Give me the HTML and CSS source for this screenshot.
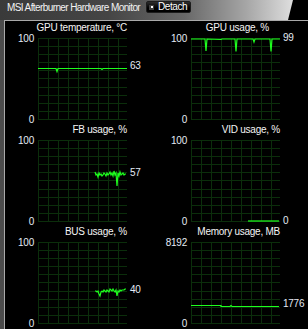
FILE: index.html
```html
<!DOCTYPE html>
<html lang="en">
<head>
    <meta charset="UTF-8">
    <meta name="viewport" content="width=device-width, initial-scale=1.0">
    <title>MSI Afterburner Hardware Monitor</title>
    <link rel="stylesheet" href="styles.css">
</head>
<body>
    <div class="titlebar">
        <span class="window-title">MSI Afterburner Hardware Monitor</span>
        <button class="detach"><span class="detach-icon"></span>Detach</button>
    </div>

    <div class="monitor">
        <div class="panel">
            <div class="panel-title">GPU temperature, °C</div>
            <div class="chart">
                <div class="axis"><span>100</span><span>0</span></div>
                <svg class="plot" viewBox="0 0 89 82">
                    <use href="#grid"/>
                    <polyline class="trace" points="0,30.5 18,30.5 19,33.5 20,30.5 63,30.5 64,31.5 65,30.5 89,30.5"/>
                </svg>
                <span class="readout" style="margin-top: 22px">63</span>
            </div>
        </div>

        <div class="panel">
            <div class="panel-title inset">GPU usage, %</div>
            <div class="chart">
                <div class="axis"><span>100</span><span>0</span></div>
                <svg class="plot" viewBox="0 0 89 82">
                    <use href="#grid"/>
                    <polyline class="trace" points="0,1 14,1 15,13 16,1 30,1.5 31,1 44,1 45,13.5 46,1 62,1 63,4 64,1 79,1 80,13.5 81,1 89,1"/>
                </svg>
                <span class="readout" style="margin-top: -6px">99</span>
            </div>
        </div>

        <div class="panel">
            <div class="panel-title">FB usage, %</div>
            <div class="chart">
                <div class="axis"><span>100</span><span>0</span></div>
                <svg class="plot" viewBox="0 0 89 82">
                    <use href="#grid"/>
                    <polyline class="trace" points="57,32 58,35 59,34 60,37 61,33 62,35 63,34 64,36 65,35 66,33 67,34 68,36 69,33 70,35 71,34 72,32 73,35 74,33 75,36 76,31 77,35 78,33 79,46 80,33 81,36 82,32 83,35 84,34 85,33 86,35 87,34 88,34"/>
                </svg>
                <span class="readout" style="margin-top: 27px">57</span>
            </div>
        </div>

        <div class="panel">
            <div class="panel-title">VID usage, %</div>
            <div class="chart">
                <div class="axis"><span>100</span><span>0</span></div>
                <svg class="plot" viewBox="0 0 89 82">
                    <use href="#grid"/>
                    <polyline class="trace" points="57,81 88,81"/>
                </svg>
                <span class="readout" style="margin-top: 75px">0</span>
            </div>
        </div>

        <div class="panel">
            <div class="panel-title">BUS usage, %</div>
            <div class="chart">
                <div class="axis"><span>100</span><span>0</span></div>
                <svg class="plot" viewBox="0 0 89 82">
                    <use href="#grid"/>
                    <polyline class="trace" points="57,49 58,49 59,50 60,49 61,52 62,54 63,50 64,49 65,50 66,48 67,49 68,50 69,48 70,49 71,50 72,47 73,48 74,49 75,47 76,49 77,50 78,48 79,54 80,49 81,50 82,48 83,49 84,48 85,48 86,48 87,47 88,47"/>
                </svg>
                <span class="readout" style="margin-top: 42px">40</span>
            </div>
        </div>

        <div class="panel">
            <div class="panel-title">Memory usage, MB</div>
            <div class="chart">
                <div class="axis"><span>8192</span><span>0</span></div>
                <svg class="plot" viewBox="0 0 89 82">
                    <use href="#grid"/>
                    <polyline class="trace" points="0,63.5 30,63.5 30,64.5 39,64.5 40,63.5 41,64.5 88,64.5"/>
                </svg>
                <span class="readout" style="margin-top: 56px">1776</span>
            </div>
        </div>
    </div>

    <svg class="sprite" aria-hidden="true">
        <symbol id="grid" viewBox="0 0 89 82">
            <path d="M0.5 0V82M10.5 0V82M20.5 0V82M30.5 0V82M40.5 0V82M50.5 0V82M60.5 0V82M70.5 0V82M80.5 0V82M0 0.5H89M0 8.5H89M0 16.5H89M0 24.5H89M0 32.5H89M0 40.5H89M0 49.5H89M0 57.5H89M0 65.5H89M0 73.5H89M0 81.5H89" stroke="#0b2e0b" stroke-width="1" fill="none"/>
        </symbol>
    </svg>
</body>
</html>
```

FILE: styles.css
```css
body {
    margin: 0;
    width: 308px;
    height: 329px;
    overflow: hidden;
    background-color: #4b4b4b;
    font-family: "Liberation Sans", Arial, sans-serif;
}
.titlebar {
    position: relative;
    height: 20px;
    display: flex;
    align-items: flex-start;
    padding-left: 7px;
    background: linear-gradient(to right, #3a3a3a 0%, #454545 35%, #686868 60%, #a6a6a6 80%, #dedede 95%);
}
.titlebar::after {
    content: "";
    position: absolute;
    top: 0;
    right: 0;
    width: 20px;
    height: 20px;
    background-color: #000;
    clip-path: polygon(5px 0, 100% 0, 100% 100%, 0 100%);
}
.window-title {
    width: 139px;
    padding-top: 2px;
    font-size: 10px;
    line-height: 12px;
    letter-spacing: -0.6px;
    color: #f2f2f2;
    white-space: nowrap;
}
.detach {
    display: flex;
    align-items: center;
    box-sizing: border-box;
    width: 45px;
    height: 12px;
    margin: 1px 0 0 0;
    padding: 0 0 0 2px;
    border: 1px solid #1c1c1c;
    border-radius: 2px;
    background: linear-gradient(#2c2c2c, #000 60%);
    color: #fff;
    font-family: inherit;
    font-size: 10px;
    line-height: 10px;
    letter-spacing: -0.4px;
}
.detach-icon {
    display: flex;
    align-items: center;
    justify-content: center;
    width: 5px;
    height: 5px;
    margin-right: 4px;
    background-color: #3e3e3e;
}
.detach-icon::before {
    content: "";
    width: 2px;
    height: 2px;
    background-color: #fff;
}
.monitor {
    display: grid;
    grid-template-columns: 153px 150px;
    grid-auto-rows: 102px;
    height: 308px;
    margin-left: 4px;
    border-top: 1px solid #a9a9a9;
    border-left: 1px solid #a9a9a9;
    background-color: #000;
}
.panel {
    padding-top: 1px;
}
.panel-title {
    box-sizing: border-box;
    width: 122px;
    height: 12px;
    margin-bottom: 4px;
    font-size: 10px;
    line-height: 12px;
    letter-spacing: -0.25px;
    color: #f4f4f4;
    text-align: right;
    white-space: nowrap;
}
.panel-title.inset {
    padding-right: 11px;
}
.chart {
    display: flex;
    height: 82px;
}
.axis {
    display: flex;
    flex-direction: column;
    justify-content: space-between;
    align-items: flex-end;
    flex: none;
    width: 29px;
    margin: -5px 4px -6px 0;
    font-size: 10px;
    line-height: 12px;
    letter-spacing: -0.25px;
    color: #e4ebf4;
}
.plot {
    flex: none;
    width: 89px;
    height: 82px;
}
.trace {
    fill: none;
    stroke: #1eff1e;
    stroke-width: 1.2;
}
.readout {
    align-self: flex-start;
    margin-left: 3px;
    font-size: 10px;
    line-height: 12px;
    letter-spacing: -0.25px;
    color: #e4ebf4;
}
.sprite {
    display: block;
    width: 0;
    height: 0;
    overflow: hidden;
}
```
